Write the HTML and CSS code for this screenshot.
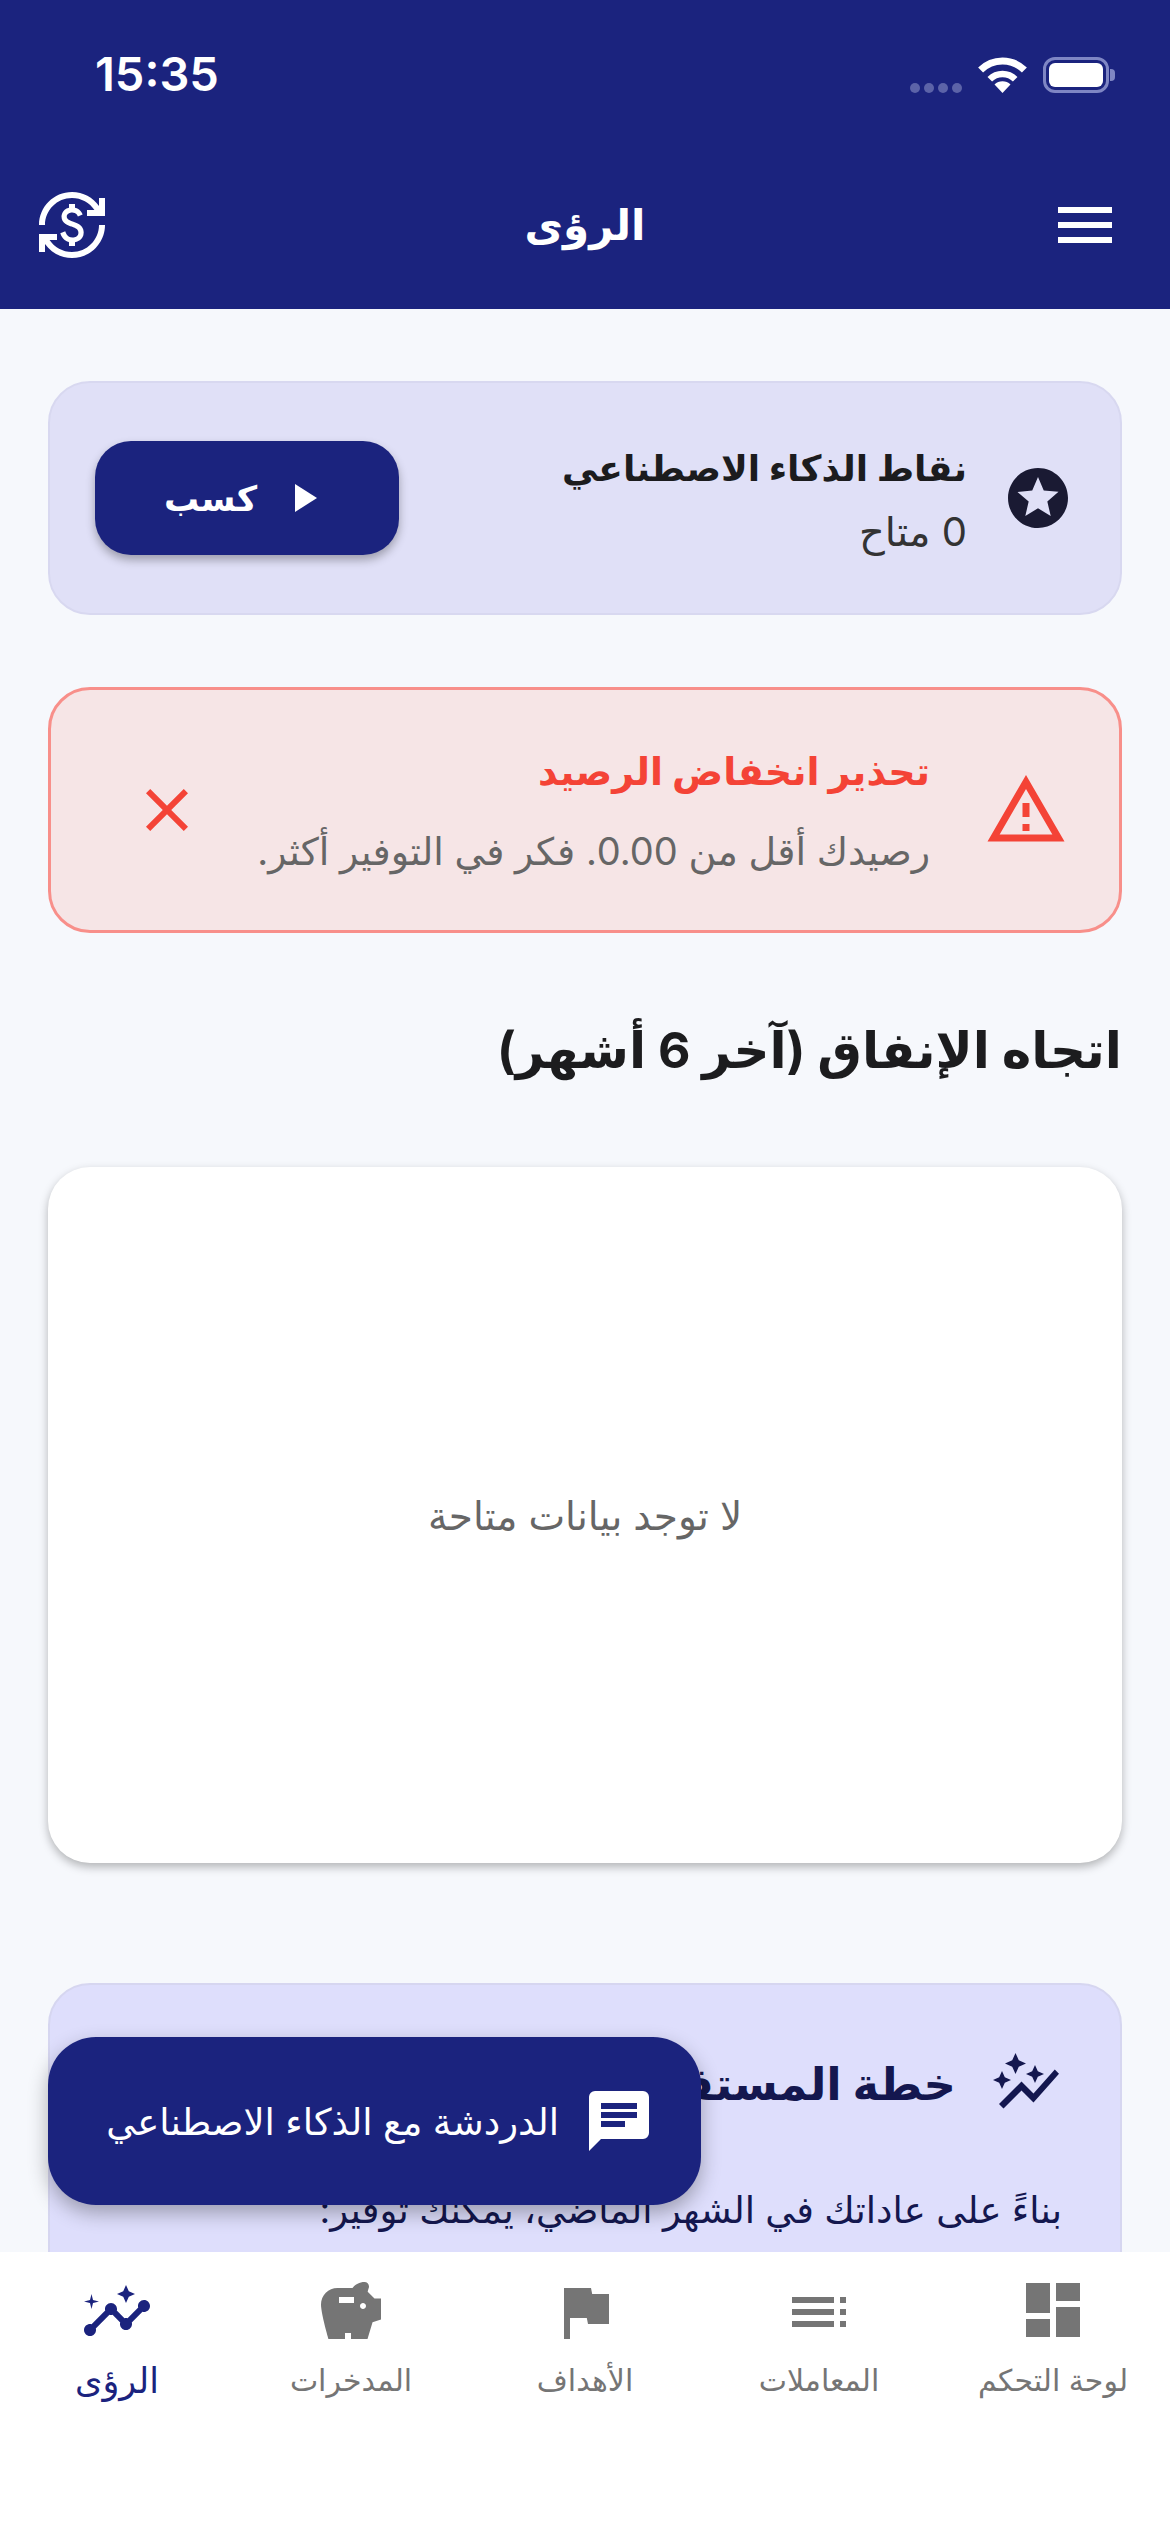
FILE: index.html
```html
<!DOCTYPE html>
<html lang="ar" dir="rtl">
<head>
<meta charset="utf-8">
<title>الرؤى</title>
<link rel="stylesheet" href="styles.css">
</head>
<body>
<div class="screen">
  <header class="top">
    <div class="status" dir="ltr">
      <span class="time">15:35</span>
      <div class="status-icons">
        <span class="dots"><i></i><i></i><i></i><i></i></span>
        <svg class="wifi" width="49" height="36" viewBox="0 0 49 36" fill="none" stroke="#fff"><path d="M2.600 13.100a31 31 0 0 1 43.800 0" stroke-width="7"/><path d="M11.800 22.300a18 18 0 0 1 25.400 0" stroke-width="6.500"/><path d="M24.500 36L16.500 27.500a11.500 11.500 0 0 1 16 0z" fill="#fff" stroke="none"/></svg>
        <span class="battery"><b></b></span>
      </div>
    </div>
    <div class="appbar" dir="ltr">
      <svg class="icon" width="72" height="72" viewBox="0 0 24 24"><path fill="#fff" d="M12.890 11.100c-1.780-.590-2.640-.960-2.640-1.900 0-1.020 1.110-1.390 1.810-1.390 1.310 0 1.790.990 1.900 1.340l1.580-.670C15.390 8.030 14.720 6.560 13 6.240V5h-2v1.260C8.520 6.820 8.510 9.120 8.510 9.220c0 2.270 2.250 2.910 3.350 3.310 1.580.560 2.280 1.070 2.280 2.030 0 1.130-1.050 1.610-1.980 1.610-1.820 0-2.340-1.870-2.400-2.090l-1.660.670c.630 2.190 2.280 2.780 2.900 2.960V19h2v-1.240c.4-.090 2.900-.590 2.900-3.220 0-1.390-.610-2.610-3.010-3.440zM3 21H1v-6h6v2H4.520c1.610 2.410 4.360 4 7.480 4 4.970 0 9-4.030 9-9h2c0 6.080-4.920 11-11 11-3.720 0-7.010-1.850-9-4.670V21zM1 12C1 5.920 5.920 1 12 1c3.720 0 7.010 1.850 9 4.670V3h2v6h-6V7h2.480C17.870 4.590 15.120 3 12 3c-4.970 0-9 4.030-9 9H1z"/></svg>
      <h1>الرؤى</h1>
      <svg class="icon menu" width="72" height="72" viewBox="0 0 24 24"><path fill="#fff" d="M3 18h18v-2H3v2zm0-5h18v-2H3v2zm0-7v2h18V6H3z"/></svg>
    </div>
  </header>

  <main class="content">
    <section class="points">
      <svg class="icon" width="72" height="72" viewBox="0 0 24 24"><path fill="#1a1a33" d="M11.990 2C6.470 2 2 6.480 2 12s4.470 10 9.990 10C17.520 22 22 17.520 22 12S17.520 2 11.990 2zm4.240 16L12 15.450 7.770 18l1.120-4.810-3.730-3.230 4.920-.420L12 5l1.920 4.530 4.920.420-3.730 3.230L16.230 18z"/></svg>
      <div class="points-text">
        <strong>نقاط الذكاء الاصطناعي</strong>
        <span>0 متاح</span>
      </div>
      <button class="earn"><svg class="play" width="48" height="48" viewBox="0 0 24 24"><path d="M16 5v14L5 12z" fill="#fff" transform="matrix(-1 0 0 1 24 0)"/></svg><span>كسب</span></button>
    </section>

    <section class="alert">
      <svg class="icon" width="84" height="84" viewBox="0 0 24 24"><path fill="#f44336" d="M12 5.990L19.530 19H4.470L12 5.990M12 2L1 21h22L12 2zm1 14h-2v2h2v-2zm0-6h-2v4h2v-4z"/></svg>
      <div class="alert-text">
        <strong>تحذير انخفاض الرصيد</strong>
        <span>رصيدك أقل من 0.00. فكر في التوفير أكثر.</span>
      </div>
      <svg class="icon" width="72" height="72" viewBox="0 0 24 24"><path fill="#f44336" d="M19 6.410L17.590 5 12 10.590 6.410 5 5 6.410 10.590 12 5 17.590 6.410 19 12 13.410 17.590 19 19 17.590 13.410 12z"/></svg>
    </section>

    <h2>اتجاه الإنفاق (آخر 6 أشهر)</h2>

    <section class="chart">لا توجد بيانات متاحة</section>

    <section class="plan">
      <div class="plan-head">
        <svg class="icon" width="72" height="72" viewBox="0 0 24 24"><path fill="#14174f" d="M14.060 9.940L12 9l2.060-.940L15 6l.940 2.060L18 9l-2.060.940L15 12l-.940-2.060zM4 14l.940-2.060L7 11l-2.060-.940L4 8l-.940 2.060L1 11l2.060.940L4 14zm4.500-5l1.090-2.410L12 5.500 9.590 4.410 8.500 2 7.410 4.410 5 5.500l2.410 1.090L8.500 9zm-4 11.500l6-6.010 4 4L23 8.930l-1.410-1.410-7.090 7.970-4-4L3 19l1.500 1.500z"/></svg>
        <strong>خطة المستقبل</strong>
      </div>
      <p>بناءً على عاداتك في الشهر الماضي، يمكنك توفير:</p>
    </section>
  </main>

  <button class="chat">
    <svg class="icon" width="72" height="72" viewBox="0 0 24 24"><path d="M20 2H4a2 2 0 0 0-2 2v18l4-4h14a2 2 0 0 0 2-2V4a2 2 0 0 0-2-2zM6 9h12v2H6zm8 5H6v-2h8zm4-6H6V6h12z" fill="#fff"/></svg>
    <span>الدردشة مع الذكاء الاصطناعي</span>
  </button>

  <nav class="tabs" dir="ltr">
    <a class="tab active">
      <svg width="72" height="72" viewBox="0 0 24 24"><path d="M21 8c-1.450 0-2.260 1.440-1.930 2.510l-3.550 3.560c-.3-.090-.740-.090-1.040 0l-2.550-2.550C12.270 10.450 11.460 9 10 9c-1.450 0-2.270 1.440-1.930 2.520l-4.560 4.550C2.440 15.740 1 16.550 1 18c0 1.100.9 2 2 2 1.450 0 2.260-1.440 1.930-2.510l4.550-4.560c.3.090.740.090 1.040 0l2.550 2.550C12.730 16.550 13.540 18 15 18c1.450 0 2.270-1.440 1.930-2.520l3.560-3.550c1.070.330 2.510-.480 2.510-1.930 0-1.100-.9-2-2-2zM15 9l.940-2.070L18 6l-2.060-.930L15 3l-.920 2.070L12 6l2.080.930zM3.500 11L4 9l2-.5L4 8l-.5-2L3 8l-2 .5L3 9z"/></svg>
      <span>الرؤى</span>
    </a>
    <a class="tab">
      <svg width="72" height="72" viewBox="0 0 24 24"><path d="M19.830 7.500l-2.270-2.270c.070-.420.180-.810.320-1.150.080-.190.120-.380.120-.580C18 2.670 17.330 2 16.500 2c-1.640 0-3.090.790-4 2h-5C4.460 4 2 6.460 2 9.500S4.500 21 4.500 21H10v-2h2v2h5.500l1.680-5.590L22 14.470V7.500h-2.170zM13 9H8V7h5v2zm3 2c-.550 0-1-.450-1-1s.450-1 1-1 1 .450 1 1-.450 1-1 1z"/></svg>
      <span>المدخرات</span>
    </a>
    <a class="tab">
      <svg width="72" height="72" viewBox="0 0 24 24"><path d="M14.400 6L14 4H5v17h2v-7h5.600l.4 2h7V6z"/></svg>
      <span>الأهداف</span>
    </a>
    <a class="tab">
      <svg width="72" height="72" viewBox="0 0 24 24"><path d="M3 7h14v2H3zm0 4h14v2H3zm0 4h14v2H3zM19 7h2v2h-2zm0 4h2v2h-2zm0 4h2v2h-2z"/></svg>
      <span>المعاملات</span>
    </a>
    <a class="tab">
      <svg width="72" height="72" viewBox="0 .7 24 24"><path d="M3 13h8V3H3v10zm0 8h8v-6H3v6zm10 0h8V11h-8v10zm0-18v6h8V3h-8z"/></svg>
      <span>لوحة التحكم</span>
    </a>
  </nav>
</div>
</body>
</html>
```
FILE: styles.css
```css
* { box-sizing: border-box; }
html, body { margin: 0; padding: 0; }
body { font-family: Inter, "DejaVu Sans", sans-serif; background: #f6f8fc; color: #1c1c1e; }
.screen { position: relative; width: 1170px; height: 2532px; overflow: hidden; display: flex; flex-direction: column; background: #f6f8fc; }
.icon { flex: none; display: block; }

.top { background: #1b237e; height: 309px; flex: none; color: #fff; }
.status { height: 148px; display: flex; justify-content: space-between; align-items: center; padding: 0 61px 0 95px; }
.time { font-size: 47px; font-weight: 600; line-height: 52px; }
.status-icons { display: flex; align-items: flex-end; gap: 16px; height: 37px; }
.dots { display: flex; gap: 4px; }
.dots i { width: 10px; height: 10px; border-radius: 5px; background: #5c63a8; }
.wifi { display: block; }
.battery { position: relative; display: block; width: 66px; height: 36px; border: 3px solid #7f86c4; border-radius: 12px; padding: 3px; }
.battery b { display: block; height: 100%; background: #fff; border-radius: 6px; }
.battery::after { content: ""; position: absolute; right: -9px; top: 9px; width: 5px; height: 12px; background: #7f86c4; border-radius: 0 4px 4px 0; }
.appbar { display: grid; grid-template-columns: 1fr auto 1fr; align-items: center; padding: 41px 36px 0; }
.appbar h1 { margin: 0; font-size: 42px; font-weight: 700; line-height: 72px; }
.menu { justify-self: end; margin-right: 13px; }

.content { flex: 1; min-height: 0; overflow: hidden; padding: 72px 48px 0; }
.points { height: 234px; border-radius: 42px; background: #e0e0f7; border: 2px solid #d8d8f0; display: flex; align-items: center; padding: 0 46px 0 45px; gap: 35px; }
.points-text { flex: 1; display: flex; flex-direction: column; gap: 14px; }
.points-text strong { font-size: 36px; font-weight: 700; line-height: 54px; }
.points-text span { font-size: 40px; line-height: 46px; color: #333; }
.earn { width: 304px; height: 114px; background: #1b237e; border: 0; border-radius: 36px; color: #fff; font: 700 35px Inter, "DejaVu Sans", sans-serif; display: flex; align-items: center; gap: 22px; padding: 0 72px; box-shadow: 0 5px 10px rgba(0,0,0,.3); }
.play { flex: none; }

.alert { margin-top: 72px; height: 246px; border-radius: 42px; background: #f6e5e6; border: 3px solid #f88f8a; display: flex; align-items: center; padding: 0 51px 0 80px; gap: 54px; }
.alert-text { flex: 1; display: flex; flex-direction: column; gap: 32px; }
.alert-text strong { font-size: 38px; line-height: 50px; color: #f44336; }
.alert-text span { font-size: 38px; line-height: 46px; color: #666; }

.content h2 { margin: 80px 0 0; font-size: 50px; font-weight: 700; line-height: 74px; color: #1c1c1e; }
.chart { margin-top: 80px; height: 696px; border-radius: 42px; background: #fff; box-shadow: 0 4px 10px rgba(0,0,0,.28); display: flex; align-items: center; justify-content: center; font-size: 39px; color: #666; }
.plan { margin-top: 120px; height: 400px; border-radius: 42px; background: #dedefc; border: 2px solid #d6d6f0; padding: 62px 58px; color: #14174f; }
.plan-head { display: flex; align-items: center; gap: 34px; }
.plan-head strong { font-size: 45px; }
.plan p { margin: 66px 0 0; font-size: 37px; line-height: 50px; }

.chat { position: absolute; left: 48px; top: 2037px; width: 653px; height: 168px; border: 0; border-radius: 48px; background: #1b237e; color: #fff; display: flex; align-items: center; gap: 24px; padding: 0 46px; font: 37px Inter, "DejaVu Sans", sans-serif; box-shadow: 0 8px 20px rgba(0,0,0,.3); }

.tabs { flex: none; height: 280px; background: #fff; display: flex; padding-top: 24px; }
.tab { flex: 1; min-width: 0; display: flex; flex-direction: column; align-items: center; color: #757575; font-size: 30px; line-height: 44px; gap: 10px; }
.tab svg { display: block; fill: #757575; }
.tab.active { color: #1b237e; font-size: 35px; }
.tab.active svg { fill: #1b237e; }
```
